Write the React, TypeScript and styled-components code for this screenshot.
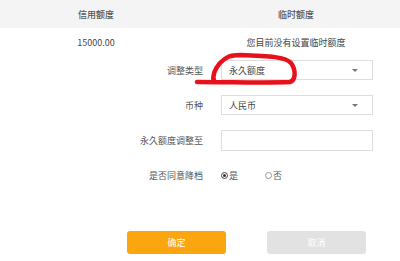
import React from "react";
import styled, { createGlobalStyle } from "styled-components";

const Global = createGlobalStyle`
  html, body { margin: 0; padding: 0; background: #fff; }
  body { font-family: "Noto Sans CJK SC", "Noto Sans", sans-serif; color: #444; }
`;

const Page = styled.div`
  position: relative;
  width: 400px;
  height: 261px;
  overflow: hidden;
  background: #fff;
`;

const TableRow = styled.div<{ $head?: boolean }>`
  display: grid;
  grid-template-columns: 192px 208px;
  height: 28px;
  align-items: center;
  background: ${(p) => (p.$head ? "#f4f4f4" : "#fff")};
  font-size: 9px;
  color: ${(p) => (p.$head ? "#555" : "#444")};
  font-weight: ${(p) => (p.$head ? 500 : 400)};
`;

const Cell = styled.div`
  text-align: center;
`;

const Form = styled.div`
  display: grid;
  grid-template-columns: 203px 152px;
  column-gap: 18px;
  row-gap: 15px;
  margin-top: 4px;
  align-items: center;
`;

const Label = styled.div`
  text-align: right;
  font-size: 9px;
  color: #555;
`;

const Select = styled.div`
  box-sizing: border-box;
  height: 20px;
  border: 1px solid #ddd;
  display: flex;
  align-items: center;
  justify-content: space-between;
  padding: 0 14px 0 7px;
  font-size: 9px;
  color: #444;
`;

const Arrow = styled.span`
  width: 0;
  height: 0;
  border-left: 3px solid transparent;
  border-right: 3px solid transparent;
  border-top: 3px solid #777;
`;

const Input = styled.div`
  box-sizing: border-box;
  height: 21px;
  border: 1px solid #ddd;
`;

const RadioGroup = styled.div`
  display: flex;
  align-items: center;
  gap: 27px;
  height: 18px;
  font-size: 9px;
  color: #555;
`;

const RadioItem = styled.label`
  display: flex;
  align-items: center;
  gap: 1px;
`;

const Dot = styled.span<{ $on?: boolean }>`
  box-sizing: border-box;
  width: 7px;
  height: 7px;
  border-radius: 50%;
  border: 1px solid ${(p) => (p.$on ? "#444" : "#999")};
  display: inline-flex;
  align-items: center;
  justify-content: center;
  &::after {
    content: "";
    width: 3px;
    height: 3px;
    border-radius: 50%;
    background: ${(p) => (p.$on ? "#333" : "transparent")};
  }
`;

const Buttons = styled.div`
  display: flex;
  gap: 41px;
  padding-left: 127px;
  margin-top: 47px;
`;

const Button = styled.div<{ $primary?: boolean }>`
  width: 99px;
  height: 23px;
  border-radius: 3px;
  background: ${(p) => (p.$primary ? "#fca60f" : "#e2e2e2")};
  color: #fff;
  font-size: 9px;
  display: flex;
  align-items: center;
  justify-content: center;
`;

const Scribble = styled.svg`
  position: absolute;
  left: 0;
  top: 0;
  pointer-events: none;
`;

export default function App() {
  return (
    <Page>
      <Global />
      <TableRow $head>
        <Cell>信用额度</Cell>
        <Cell>临时额度</Cell>
      </TableRow>
      <TableRow>
        <Cell>15000.00</Cell>
        <Cell>您目前没有设置临时额度</Cell>
      </TableRow>
      <Form>
        <Label>调整类型</Label>
        <Select>
          <span>永久额度</span>
          <Arrow />
        </Select>
        <Label>币种</Label>
        <Select>
          <span>人民币</span>
          <Arrow />
        </Select>
        <Label>永久额度调整至</Label>
        <Input />
        <Label>是否同意降档</Label>
        <RadioGroup>
          <RadioItem>
            <Dot $on />是
          </RadioItem>
          <RadioItem>
            <Dot />否
          </RadioItem>
        </RadioGroup>
      </Form>
      <Buttons>
        <Button $primary>确定</Button>
        <Button>取消</Button>
      </Buttons>
      <Scribble width="400" height="261" viewBox="0 0 400 261">
        <path
          d="M197 82 C230 82 270 83 290 82 C296 80 296 70 291 63 C286 57 270 56 240 55 C230 55 226 57 220 63 C214 70 212 76 214 82"
          fill="none"
          stroke="#e8101a"
          strokeWidth="4.5"
          strokeLinecap="round"
          strokeLinejoin="round"
        />
      </Scribble>
    </Page>
  );
}
